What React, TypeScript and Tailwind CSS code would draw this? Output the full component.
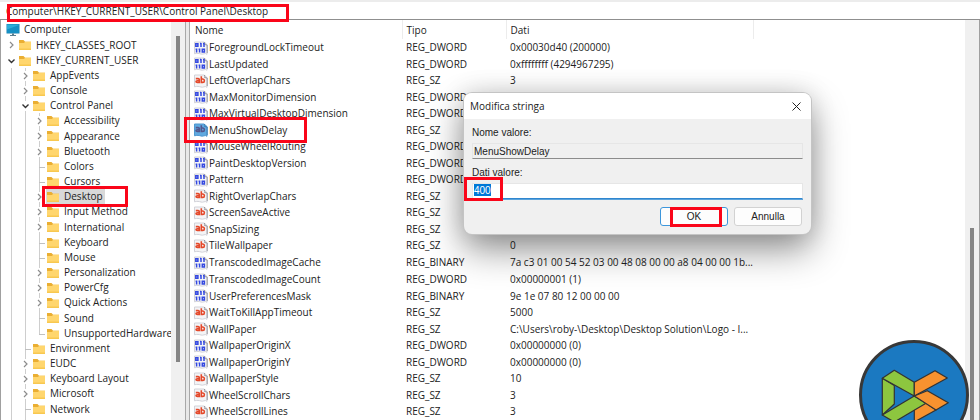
import React from "react";

type Mark = "open" | "closed" | "leaf";
type Node = { name: string; depth: number; mark: Mark; selected?: boolean };

const nodes: Node[] = [
  { name: "HKEY_CLASSES_ROOT", depth: 0, mark: "closed" },
  { name: "HKEY_CURRENT_USER", depth: 0, mark: "open" },
  { name: "AppEvents", depth: 1, mark: "closed" },
  { name: "Console", depth: 1, mark: "closed" },
  { name: "Control Panel", depth: 1, mark: "open" },
  { name: "Accessibility", depth: 2, mark: "closed" },
  { name: "Appearance", depth: 2, mark: "closed" },
  { name: "Bluetooth", depth: 2, mark: "closed" },
  { name: "Colors", depth: 2, mark: "leaf" },
  { name: "Cursors", depth: 2, mark: "leaf" },
  { name: "Desktop", depth: 2, mark: "closed", selected: true },
  { name: "Input Method", depth: 2, mark: "closed" },
  { name: "International", depth: 2, mark: "closed" },
  { name: "Keyboard", depth: 2, mark: "leaf" },
  { name: "Mouse", depth: 2, mark: "leaf" },
  { name: "Personalization", depth: 2, mark: "closed" },
  { name: "PowerCfg", depth: 2, mark: "closed" },
  { name: "Quick Actions", depth: 2, mark: "closed" },
  { name: "Sound", depth: 2, mark: "leaf" },
  { name: "UnsupportedHardwareN", depth: 2, mark: "leaf" },
  { name: "Environment", depth: 1, mark: "leaf" },
  { name: "EUDC", depth: 1, mark: "closed" },
  { name: "Keyboard Layout", depth: 1, mark: "closed" },
  { name: "Microsoft", depth: 1, mark: "closed" },
  { name: "Network", depth: 1, mark: "leaf" },
  { name: "Printers", depth: 1, mark: "leaf" },
];

type Value = [name: string, type: string, data: string];

const values: Value[] = [
  ["ForegroundLockTimeout", "REG_DWORD", "0x00030d40 (200000)"],
  ["LastUpdated", "REG_DWORD", "0xffffffff (4294967295)"],
  ["LeftOverlapChars", "REG_SZ", "3"],
  ["MaxMonitorDimension", "REG_DWORD", ""],
  ["MaxVirtualDesktopDimension", "REG_DWORD", ""],
  ["MenuShowDelay", "REG_SZ", ""],
  ["MouseWheelRouting", "REG_DWORD", ""],
  ["PaintDesktopVersion", "REG_DWORD", ""],
  ["Pattern", "REG_DWORD", ""],
  ["RightOverlapChars", "REG_SZ", ""],
  ["ScreenSaveActive", "REG_SZ", ""],
  ["SnapSizing", "REG_SZ", ""],
  ["TileWallpaper", "REG_SZ", "0"],
  ["TranscodedImageCache", "REG_BINARY", "7a c3 01 00 54 52 03 00 48 08 00 00 a8 04 00 00 1b..."],
  ["TranscodedImageCount", "REG_DWORD", "0x00000001 (1)"],
  ["UserPreferencesMask", "REG_BINARY", "9e 1e 07 80 12 00 00 00"],
  ["WaitToKillAppTimeout", "REG_SZ", "5000"],
  ["WallPaper", "REG_SZ", "C:\\Users\\roby-\\Desktop\\Desktop Solution\\Logo - I..."],
  ["WallpaperOriginX", "REG_DWORD", "0x00000000 (0)"],
  ["WallpaperOriginY", "REG_DWORD", "0x00000000 (0)"],
  ["WallpaperStyle", "REG_SZ", "10"],
  ["WheelScrollChars", "REG_SZ", "3"],
  ["WheelScrollLines", "REG_SZ", "3"],
];

function Folder() {
  return (
    <svg className="h-3 w-3.5 shrink-0" viewBox="0 0 14 12" aria-hidden="true">
      <path d="M1 1h4.500l1.600 1.800H13V6H1z" fill="#eaae32" />
      <path d="M1 4h5l1.200-1.200H13V11H1z" fill="#ffd66e" />
      <path d="M1 9.500h12V11H1z" fill="#f8c850" />
    </svg>
  );
}

function Monitor() {
  return (
    <svg className="h-3.5 w-3.5 shrink-0" viewBox="0 0 14 14" aria-hidden="true">
      <path d="M0.500 1h13v9.500h-13z" fill="#1583b4" />
      <path d="M1 1.500h12V10H1z" fill="#2badd9" />
      <path d="M1 10V6.500l12-4.500v8z" fill="#1690c4" />
      <path d="M6 10.500h2v1.500H6zM4 12h6v1H4z" fill="#5b7f90" />
    </svg>
  );
}

function Toggle({ mark }: { mark: Mark }) {
  if (mark === "leaf") {
    return (
      <svg className="h-4 w-3.5 shrink-0" viewBox="0 0 14 16" aria-hidden="true">
        <path d="M7 8.500h6" stroke="#c0c0c0" fill="none" />
      </svg>
    );
  }
  return (
    <svg className="h-4 w-3.5 shrink-0" viewBox="0 0 14 16" aria-hidden="true">
      <path d="M3 3h8v10H3z" fill="#fff" />
      {mark === "open" ? (
        <path d="M4.500 6.500l3 3 3-3" stroke="#333" strokeWidth="1.400" fill="none" />
      ) : (
        <path d="M6 5l3 3-3 3" stroke="#8c8c8c" strokeWidth="1.200" fill="none" />
      )}
    </svg>
  );
}

/* Vertical connector drawn through one indent level. */
function Guide({ half = false }: { half?: boolean }) {
  return (
    <svg className="h-4 w-3.5 shrink-0" viewBox="0 0 14 16" aria-hidden="true">
      <path d={half ? "M7.500 0v8" : "M7.500 0v16"} stroke="#cecece" fill="none" />
    </svg>
  );
}

function ValueIcon({ text, selected }: { text: boolean; selected: boolean }) {
  return (
    <svg className="h-3.5 w-3.5 shrink-0" viewBox="0 0 14 14" aria-hidden="true">
      <path
        d="M0.500 1h9.500l3 2.500V13.300q-1.500-1.200-3-0.500t-3 0.200-3-0.600-3.500 0.400z"
        fill={selected ? "#5fa9e0" : "#f4f4f6"}
        stroke={selected ? "#4f97cf" : "#d2d2d8"}
      />
      <path d="M10.500 1q0.500 1.500 0 2.500l2.700 0.500V12" fill="none" stroke={selected ? "#3d7fb4" : "#97979e"} />
      {text ? (
        <g fill="none" stroke={selected ? "#54568c" : "#e4482a"} strokeWidth="1.600">
          <path d="M1.800 4.600h2.300q1.200 0 1.200 1.200V9.200M5.300 6.700H3.300q-1.300 0-1.300 0.900t1.300 0.900h2" />
          <path d="M7.300 2.200V9.200M7.300 5h1.500q1.600 0 1.600 1.700t-1.600 1.700H7.300" />
        </g>
      ) : (
        <g fill="none" stroke="#3348e0" strokeWidth="1.500">
          <path d="M1.800 2.700h2.100v2.600H1.800zM7 2v4M10 2v4M6 2.600h1M9 2.600h1" />
          <path d="M2.600 7.600v4M5.600 7.600v4M1.600 8.200h1M4.600 8.200h1M8.300 8.300h2.100v2.600H8.300z" />
        </g>
      )}
    </svg>
  );
}

function Tree() {
  return (
    <nav className="flex w-[170px] shrink-0 flex-col overflow-hidden pt-0.5 pl-[3px]" aria-label="Chiavi">
      <div className="flex h-[15px] items-center gap-1 pl-0.5">
        <Monitor />
        <span>Computer</span>
      </div>
      <ul>
        {nodes.map((n, i) => {
          const next = nodes[i + 1];
          return (
            <li key={n.name} className="flex h-[15px] items-center nth-[6n+1]:h-4">
              {n.depth > 0 && <Guide />}
              {n.depth > 1 && <Guide />}
              <span className="grid shrink-0">
                {n.depth > 0 && (
                  <span className="col-start-1 row-start-1">
                    <Guide half={next !== undefined && next.depth < n.depth} />
                  </span>
                )}
                <span className="col-start-1 row-start-1">
                  <Toggle mark={n.mark} />
                </span>
              </span>
              <span className={n.selected ? "flex items-center bg-[#d9d9d9] pr-0.5" : "flex items-center"}>
                <Folder />
                <span className="pl-1 leading-[15px] whitespace-nowrap">{n.name}</span>
              </span>
            </li>
          );
        })}
      </ul>
    </nav>
  );
}

function Values() {
  return (
    <table className="w-full table-fixed border-collapse text-left leading-[15px] whitespace-nowrap">
      <colgroup>
        <col className="w-[212px]" />
        <col className="w-[104px]" />
        <col className="w-[247px]" />
        <col />
      </colgroup>
      <thead>
        <tr className="h-[19px]">
          <th className="border-r border-[#ececec] p-0 pt-0.5 pl-[5px] font-normal">Nome</th>
          <th className="border-r border-[#ececec] p-0 pt-0.5 pl-1 font-normal">Tipo</th>
          <th className="border-r border-[#ececec] p-0 pt-0.5 pl-1 font-normal">Dati</th>
          <td className="p-0" />
        </tr>
      </thead>
      <tbody>
        {values.map(([name, type, data]) => (
          <tr key={name} className="h-4 odd:h-[17px] nth-[14n]:h-[17px]">
            <td className="p-0 pl-1">
              <span className="flex items-center gap-px">
                <ValueIcon text={type === "REG_SZ"} selected={name === "MenuShowDelay"} />
                {name}
              </span>
            </td>
            <td className="p-0 pl-1">{type}</td>
            <td className="p-0 pl-1">{data}</td>
            <td className="p-0" />
          </tr>
        ))}
      </tbody>
    </table>
  );
}

function Dialog() {
  return (
    <section
      role="dialog"
      aria-label="Modifica stringa"
      className="absolute top-[93px] left-[464px] w-[347px] overflow-hidden rounded-lg bg-[#f0f0f0] font-['Liberation_Sans',sans-serif] text-[10px] shadow-[0_0_0_1px_#c4c4c4,0_0_26px_rgba(0,0,0,0.14),0_16px_36px_rgba(0,0,0,0.42)]"
    >
      <header className="flex h-[26px] items-center justify-between bg-white pr-2 pl-1.5 font-['Open_Sans','Noto_Sans',sans-serif]">
        <h2>Modifica stringa</h2>
        <button aria-label="Chiudi" className="p-0.5">
          <svg className="h-[9px] w-[9px]" viewBox="0 0 9 9" aria-hidden="true">
            <path d="M0.500 0.500l8 8M8.500 0.500l-8 8" stroke="#222" fill="none" />
          </svg>
        </button>
      </header>
      <form className="flex flex-col p-2" onSubmit={(e) => e.preventDefault()}>
        <label htmlFor="value-name" className="leading-3">Nome valore:</label>
        <input
          id="value-name"
          readOnly
          defaultValue="MenuShowDelay"
          className="mt-1 h-4 w-full border border-[#e6e6e6] border-b-[#8c8c8c] bg-[#f0f0f0] pl-px outline-none"
        />
        <label htmlFor="value-data" className="mt-2 leading-3">Dati valore:</label>
        <div className="mt-1 flex h-4 border border-[#e6e6e6] border-b-[#2f86cf] bg-white pl-px shadow-[0_1px_0_#5ba3dc]">
          <input
            id="value-data"
            defaultValue="400"
            className="h-3 w-[17px] bg-[#0078d7] text-white outline-none"
          />
        </div>
        <div className="mt-2 flex justify-end gap-1.5 pr-px">
          <button className="h-[19px] w-[68px] rounded-[3px] border border-[#3d96db] bg-[#fdfdfd]">OK</button>
          <button className="h-[19px] w-[68px] rounded-[3px] border border-[#d2d2d2] bg-[#fdfdfd]">Annulla</button>
        </div>
      </form>
    </section>
  );
}

function Logo() {
  return (
    <svg className="absolute top-[340px] left-[859px] h-[110px] w-[110px]" viewBox="0 0 110 110" role="img" aria-label="Desktop Solution">
      <circle cx="55" cy="55" r="53.500" fill="#1b79c1" stroke="#383838" strokeWidth="3" />
      <g stroke="#333" strokeWidth="1.200" strokeLinejoin="round">
        <path d="M23.300 38.300l12 7.200V64l-12 11z" fill="#8dc63f" />
        <path d="M23.300 38.300l12-8 20 12V56z" fill="#8dc63f" />
        <path d="M55.300 63v19L77 70l-10-7z" fill="#f7922f" />
        <path d="M23.300 75l32-19L67 63.300 35.300 82z" fill="#8dc63f" />
        <path d="M55.300 42.300L76 30.700l12.300 7.300-33 18z" fill="#f7922f" />
        <path d="M55.300 56l13-5.300 21 12L77 70z" fill="#f7922f" />
      </g>
    </svg>
  );
}

const frame = "pointer-events-none absolute border-[3px] border-[#fa0519]";

export default function App() {
  return (
    <main className="relative flex h-screen flex-col overflow-hidden bg-white font-['Open_Sans','Noto_Sans',sans-serif] text-[10px] text-[#222]">
      <div className="shrink-0 border-t-2 border-b border-t-[#ececec] border-b-[#8f8f8f]">
        <input
          aria-label="Indirizzo"
          defaultValue="Computer\HKEY_CURRENT_USER\Control Panel\Desktop"
          className="block h-[17px] w-full bg-white pl-1.5 outline-none"
        />
      </div>
      <div className="flex min-h-0 flex-1 border-l border-[#a0a0a0]">
        <Tree />
        <div className="flex w-3.5 shrink-0 justify-center bg-[#f0f0f0] pt-4">
          <div className="h-[326px] w-1 bg-[#858585]" />
        </div>
        <div className="w-[5px] shrink-0 border-x border-[#a8a8a8] bg-[#e8e8e8]" />
        <div className="min-w-0 flex-1 overflow-hidden">
          <Values />
        </div>
        <div className="flex w-[15px] shrink-0 justify-center border-r border-[#a0a0a0] bg-[#f0f0f0] pt-[208px]">
          <div className="w-1 bg-[#858585]" />
        </div>
      </div>
      <Dialog />
      <Logo />
      <div className={`${frame} top-1 left-[7px] h-[18px] w-[282px]`} />
      <div className={`${frame} top-[117px] left-[184px] h-[26px] w-[123px]`} />
      <div className={`${frame} top-[186px] left-[42px] h-[21px] w-[86px]`} />
      <div className={`${frame} top-[177px] left-[464px] h-[24px] w-[39px]`} />
      <div className={`${frame} top-[207px] left-[670px] h-[20px] w-[52px]`} />
    </main>
  );
}
